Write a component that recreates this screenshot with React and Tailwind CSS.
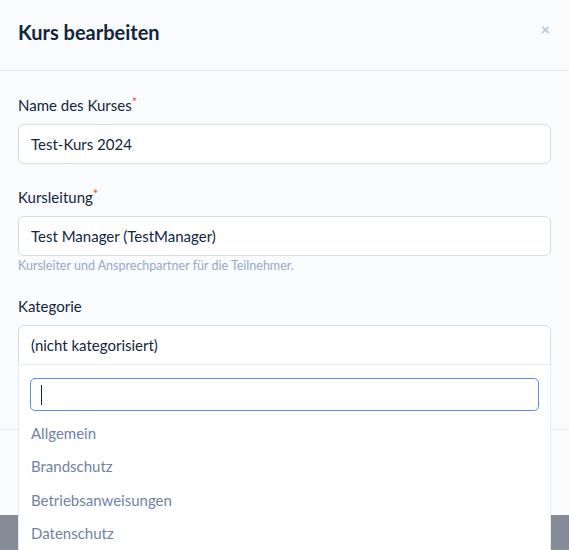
import React from "react";

const CATEGORIES = ["Allgemein", "Brandschutz", "Betriebsanweisungen", "Datenschutz"];

function Label({ children, required }) {
  return (
    <label className="block mb-[8px] text-[15px] leading-[22px] text-[#12263f]">
      {children}
      {required && <span className="text-[#e9573f] align-top text-[13px] leading-[16px]">*</span>}
    </label>
  );
}

export default function App() {
  return (
    <div
      className="w-[569px] h-[550px] overflow-hidden bg-[#858b97] relative"
      style={{ fontFamily: "Lato, 'Open Sans', sans-serif" }}
    >
      <div className="bg-[#f9fbfd]">
        {/* header */}
        <div className="h-[71px] flex items-start justify-between px-[18px] border-b border-[#e3ebf6]">
          <h2 className="mt-[19px] text-[20px] leading-[26px] font-bold text-[#12263f]">Kurs bearbeiten</h2>
          <button className="mt-[19px] mr-[1px] text-[#b9c6d8] text-[16px] leading-[20px] font-bold">×</button>
        </div>

        {/* body */}
        <div className="px-[18px] pt-[23px] pb-[64px] border-b border-[#e3ebf6]">
          <div className="mb-[22px]">
            <Label required>Name des Kurses</Label>
            <div className="h-[40px] flex items-center px-[12px] bg-white border border-[#d2ddec] rounded-[6px] text-[15px] text-[#12263f]">
              Test-Kurs 2024
            </div>
          </div>

          <div className="mb-[20px]">
            <Label required>Kursleitung</Label>
            <div className="h-[40px] flex items-center px-[12px] bg-white border border-[#d2ddec] rounded-[6px] text-[15px] text-[#12263f]">
              Test Manager (TestManager)
            </div>
            <p className="mt-[1px] text-[12.5px] leading-[18px] text-[#95aac9]">
              Kursleiter und Ansprechpartner für die Teilnehmer.
            </p>
          </div>

          <div>
            <Label>Kategorie</Label>
            <div className="relative">
              <div className="h-[40px] flex items-center px-[12px] bg-white border border-[#d2ddec] rounded-t-[6px] text-[15px] text-[#12263f]">
                (nicht kategorisiert)
              </div>
              {/* open dropdown */}
              <div className="absolute left-0 right-0 top-[39px] z-10 bg-white border border-[#e3ebf6] rounded-b-[6px] px-[11px] pt-[13px] pb-[6px]">
                <div className="h-[33px] flex items-center px-[10px] border-[1.5px] border-[#5b8fd9] rounded-[5px] bg-white">
                  <span className="w-px h-[20px] bg-[#12263f]" />
                </div>
                <ul className="mt-[5px]">
                  {CATEGORIES.map((c) => (
                    <li key={c} className="h-[33.5px] flex items-center px-[1px] text-[15px] text-[#6e84a3]">
                      {c}
                    </li>
                  ))}
                </ul>
              </div>
            </div>
          </div>
        </div>

        {/* footer */}
        <div className="h-[85px]" />
      </div>
    </div>
  );
}
